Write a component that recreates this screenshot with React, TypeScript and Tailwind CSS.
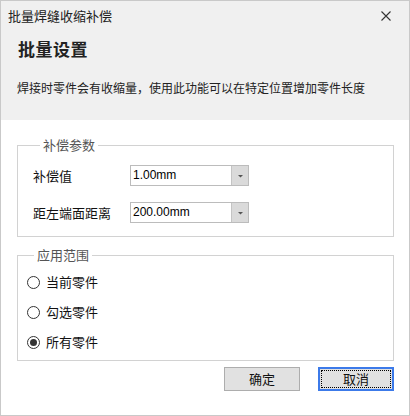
const FONT = "font-['Noto_Sans_CJK_SC','Noto_Sans',sans-serif]"

const SCOPES = [
  { label: '当前零件', checked: false },
  { label: '勾选零件', checked: false },
  { label: '所有零件', checked: true },
]

function Combo({ value }: { value: string }) {
  return (
    <div className="flex h-[21px] w-[119px] border border-[#bcbcbc] bg-white">
      <span className="flex-1 pl-[2px] text-[12px] leading-[19px] text-black font-['Liberation_Sans','Noto_Sans_CJK_SC',sans-serif]">
        {value}
      </span>
      <span className="flex w-[17px] items-center justify-center border-l border-[#c4c4c4] bg-[#dadada]">
        <svg width="7" height="4" viewBox="0 0 7 4">
          <path d="M1 1h5L3.5 3.5z" fill="#555" />
        </svg>
      </span>
    </div>
  )
}

export default function App() {
  return (
    <div className={`flex h-[416px] w-[410px] flex-col border border-[#c9c9c9] bg-white ${FONT}`}>
      {/* Header */}
      <div className="h-[119px] bg-[#f0f0f0]">
        <div className="flex h-[29px] items-center justify-between pl-[7px] pr-[18px]">
          <span className="text-[13px] leading-[18px] text-[#222]">批量焊缝收缩补偿</span>
          <svg width="10" height="10" viewBox="0 0 10 10">
            <path d="M0.5 0.5l9 9M9.5 0.5l-9 9" stroke="#333" strokeWidth="1.1" />
          </svg>
        </div>
        <h1 className="mt-[7px] pl-[17px] text-[17px] font-bold leading-[24px] tracking-[0.5px] text-[#222]">批量设置</h1>
        <p className="mt-[18px] pl-[16px] text-[12px] leading-[18px] text-[#222]">
          焊接时零件会有收缩量，使用此功能可以在特定位置增加零件长度
        </p>
      </div>

      <div className="flex flex-col pl-[16px] pr-[15px]">
        {/* 补偿参数 */}
        <fieldset className="mt-[16px] border border-[#d2d2d2] pb-[13px] pl-[15px] pt-[11px]">
          <legend className="ml-[7px] px-[3px] text-[13px] leading-[18px] text-[#555]">补偿参数</legend>
          <div className="flex flex-col gap-[16px]">
            <div className="flex items-center">
              <span className="w-[97px] text-[13px] leading-[18px] text-[#111]">补偿值</span>
              <Combo value="1.00mm" />
            </div>
            <div className="flex items-center">
              <span className="w-[97px] text-[13px] leading-[18px] text-[#111]">距左端面距离</span>
              <Combo value="200.00mm" />
            </div>
          </div>
        </fieldset>

        {/* 应用范围 */}
        <fieldset className="mt-[9px] border border-[#d2d2d2] pb-[8px] pl-[9px] pt-[8px]">
          <legend className="ml-[7px] px-[3px] text-[13px] leading-[18px] text-[#555]">应用范围</legend>
          <div className="flex flex-col gap-[10px]">
            {SCOPES.map(({ label, checked }) => (
              <label key={label} className="flex h-[20px] items-center gap-[6px]">
                <span className="flex h-[13px] w-[13px] items-center justify-center rounded-full border border-[#333] bg-white">
                  {checked && <span className="h-[7px] w-[7px] rounded-full bg-[#333]" />}
                </span>
                <span className="text-[13px] leading-[18px] text-[#111]">{label}</span>
              </label>
            ))}
          </div>
        </fieldset>

        {/* Buttons */}
        <div className="mt-[6px] flex justify-end gap-[18px]">
          <button
            type="button"
            className="h-[24px] w-[76px] border border-[#adadad] bg-[#e1e1e1] text-[13px] leading-[20px] text-[#111]"
          >
            确定
          </button>
          <button
            type="button"
            className="h-[24px] w-[76px] border-2 border-[#3c7ae9] bg-[#e1e1e1] text-[13px] leading-[20px] text-[#111] outline-1 outline-dotted outline-black outline-offset-[-4px]"
          >
            取消
          </button>
        </div>
      </div>
    </div>
  )
}
